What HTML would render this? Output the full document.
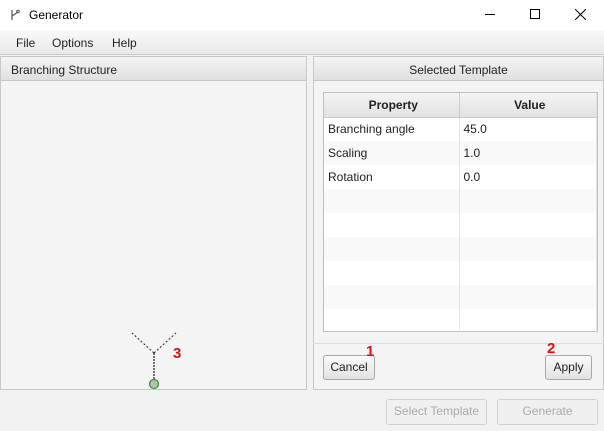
<!DOCTYPE html><html><head><style>
*{box-sizing:border-box;margin:0;padding:0}
body{width:604px;height:431px;background:#f2f2f2;font-family:"Liberation Sans",sans-serif;font-size:12px;color:#222;position:relative;overflow:hidden}
.a{position:absolute}
.hdr{background:linear-gradient(#f4f4f4,#e0e0e0);border:1px solid #c8c8c8;}
.btn{position:absolute;border:1px solid #a8a8a8;border-radius:3px;background:linear-gradient(#fafafa,#e2e2e2);text-align:center;font-size:12px;line-height:23px}
td{border-right:1px solid #e4e4e4;height:24px;padding-left:4px;font-size:12px}
</style></head><body>
<div class="a" style="left:0;top:0;width:604px;height:30px;background:#fff"></div>
<svg class="a" style="left:9px;top:9px" width="12" height="12"><path d="M3 1V11M3 7L9 3" stroke="#555" fill="none" stroke-width="1.2"/><circle cx="9" cy="2.5" r="1.3" fill="none" stroke="#555"/></svg>
<div class="a" style="left:29px;top:8px;font-size:12px;color:#000">Generator</div>
<div class="a" style="left:485px;top:14px;width:10px;height:1px;background:#000"></div>
<div class="a" style="left:530px;top:9px;width:10px;height:10px;border:1px solid #000"></div>
<svg class="a" style="left:575px;top:9px" width="11" height="11"><path d="M0 0L11 11M11 0L0 11" stroke="#000"/></svg>
<div class="a" style="left:0;top:30px;width:604px;height:25px;background:linear-gradient(#fafafa,#e8e8e8);border-bottom:1px solid #c8c8c8"></div>
<div class="a" style="left:16px;top:36px">File</div>
<div class="a" style="left:52px;top:36px">Options</div>
<div class="a" style="left:112px;top:36px">Help</div>
<div class="a" style="left:0;top:56px;width:307px;height:334px;border:1px solid #c8c8c8;background:#f4f4f4"></div>
<div class="a hdr" style="left:0;top:56px;width:307px;height:25px;padding:6px 0 0 10px">Branching Structure</div>
<div class="a" style="left:313px;top:56px;width:291px;height:334px;border:1px solid #c8c8c8;background:#f4f4f4"></div>
<div class="a hdr" style="left:313px;top:56px;width:291px;height:25px;padding-top:6px;text-align:center">Selected Template</div>
<div class="a" style="left:313px;top:343px;width:291px;height:1px;background:#ddd"></div>
<div class="a" style="left:323px;top:92px;width:275px;height:240px;border:1px solid #c0c0c0;background:#fff">
<table style="border-collapse:collapse;width:273px">
<tr style="background:linear-gradient(#f4f4f4,#e2e2e2);font-weight:bold"><td style="width:135px;text-align:center;border-bottom:1px solid #ccc;border-right:1px solid #ccc">Property</td><td style="text-align:center;border-bottom:1px solid #ccc">Value</td></tr>
<tr><td>Branching angle</td><td>45.0</td></tr>
<tr style="background:#f9f9f9"><td>Scaling</td><td>1.0</td></tr>
<tr><td>Rotation</td><td>0.0</td></tr>
<tr style="background:#f9f9f9"><td></td><td></td></tr><tr><td></td><td></td></tr>
<tr style="background:#f9f9f9"><td></td><td></td></tr><tr><td></td><td></td></tr>
<tr style="background:#f9f9f9"><td></td><td></td></tr><tr><td></td><td></td></tr>
</table></div>
<div class="btn" style="left:323px;top:355px;width:52px;height:25px">Cancel</div>
<div class="btn" style="left:545px;top:355px;width:47px;height:25px">Apply</div>
<div class="a" style="left:366px;top:343px;color:#e01010;font-weight:bold;font-size:15px">1</div>
<div class="a" style="left:547px;top:340px;color:#e01010;font-weight:bold;font-size:15px">2</div>
<div class="a" style="left:173px;top:345px;color:#e01010;font-weight:bold;font-size:15px">3</div>
<svg class="a" style="left:120px;top:325px" width="70" height="70"><path d="M34 28V56" stroke="#444" stroke-dasharray="2,1" stroke-width="1.5"/><path d="M34 28L12 8M34 28L56 8" stroke="#222" stroke-dasharray="2,2"/><circle cx="34" cy="59" r="4.5" fill="#bbb" stroke="#2a9a2a" stroke-width="1.2"/></svg>
<div class="btn" style="left:386px;top:399px;width:101px;height:26px;color:#aaa;border-color:#d0d0d0;background:#f0f0f0">Select Template</div>
<div class="btn" style="left:497px;top:399px;width:101px;height:26px;color:#aaa;border-color:#d0d0d0;background:#f0f0f0">Generate</div>
</body></html>
